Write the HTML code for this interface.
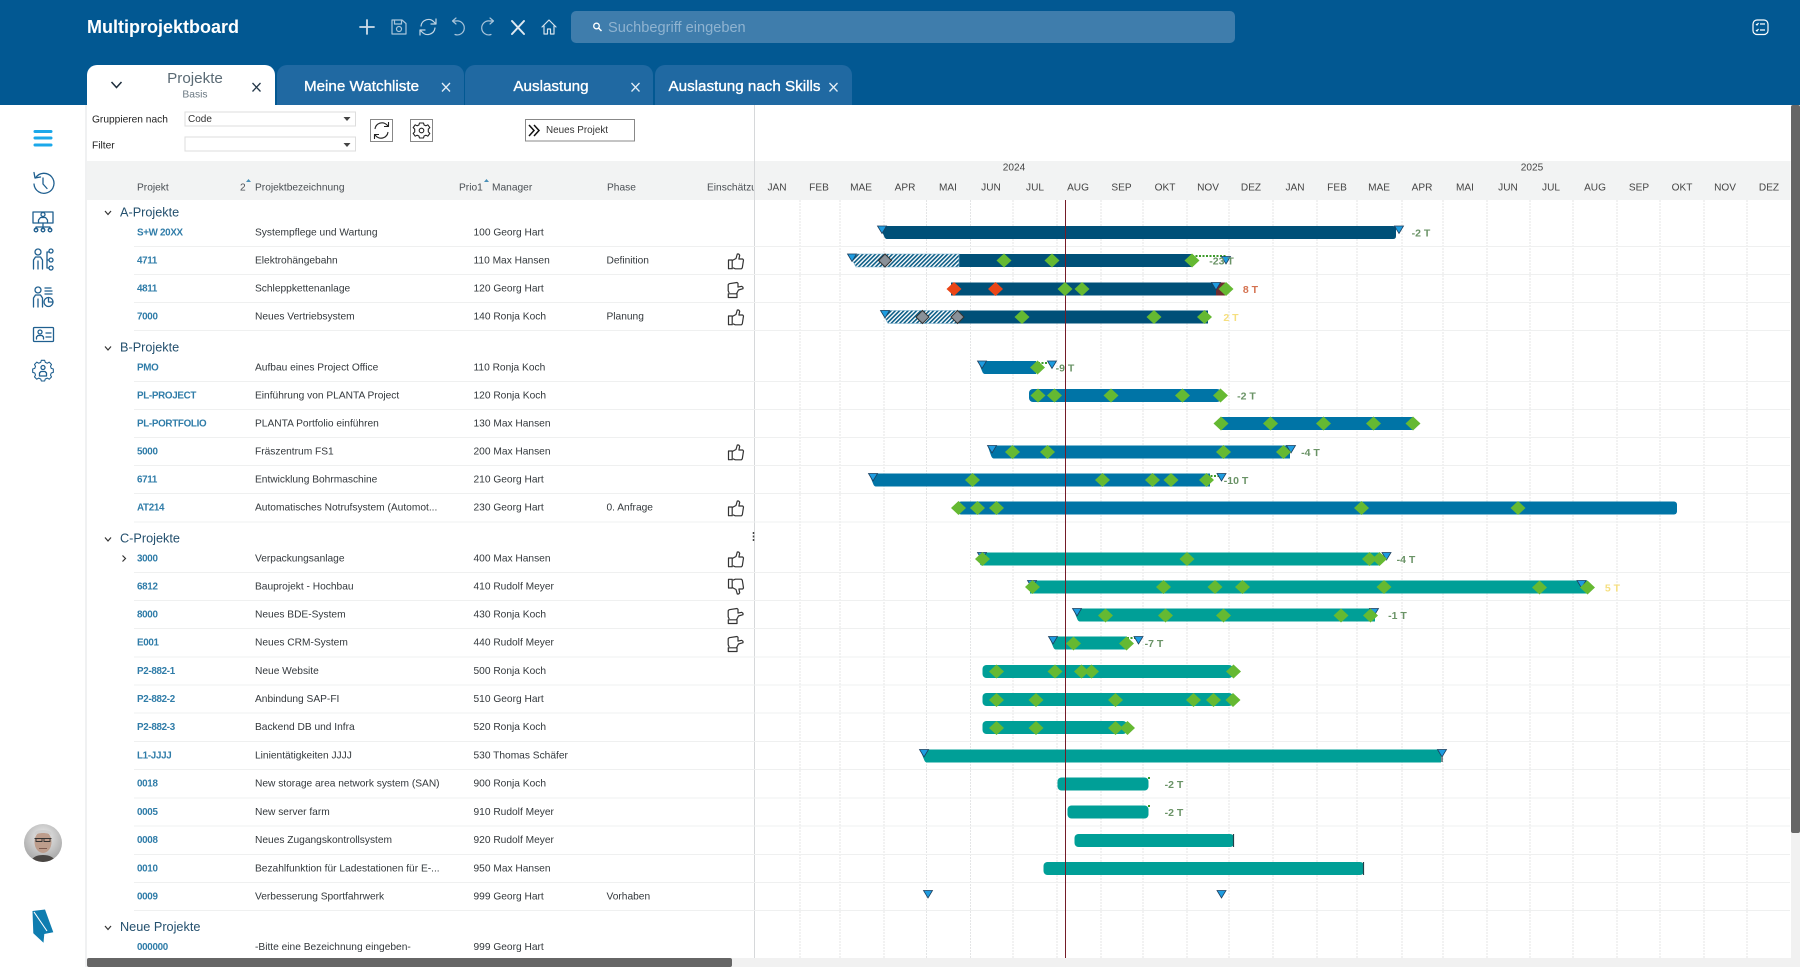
<!DOCTYPE html>
<html lang="de"><head><meta charset="utf-8"><title>Multiprojektboard</title>
<style>
html,body{margin:0;padding:0;background:#fff;width:1800px;height:967px;overflow:hidden}
svg{display:block;font-family:"Liberation Sans",sans-serif}
body>svg{filter:blur(.3px)}
.t text{font-size:10.2px;fill:#33383c}
.c text{font-size:9.8px;fill:#2f7ca8;font-weight:bold;letter-spacing:-.3px}
.h text{font-size:10.2px;fill:#4a4f54}
.m text{font-size:10.1px;fill:#444;text-anchor:middle}
.g text{font-size:12.7px;fill:#24506e}
.l text{font-size:10.5px;font-weight:bold;fill:#6a9366;text-anchor:middle}
.tab{font-size:15.2px;fill:#fff;text-anchor:middle;stroke:#fff;stroke-width:.35}
</style></head><body>
<svg width="1800" height="967" viewBox="0 0 1800 967" xmlns="http://www.w3.org/2000/svg">
<defs>
<path id="d" d="M-7.5 0 0-7 7.5 0 0 7z" fill="#65b932"/>
<path id="e" d="M-7.5 0 0-7 7.5 0 0 7z" fill="#ea4517"/>
<path id="x" d="M-6.5 0 0-6.5 6.5 0 0 6.5z" fill="#8a9199" stroke="#333" stroke-width="1"/>
<path id="v" d="M-4.5-6.5H4.500L0 1z" fill="#1e9ce0" stroke="#1d3f5e" stroke-width=".8"/>
<pattern id="h" width="3" height="3" patternUnits="userSpaceOnUse" patternTransform="rotate(45)"><rect width="3" height="3" fill="#fff"/><rect width="1.600" height="3" fill="#0b5d86"/></pattern>
<g id="tu" fill="none" stroke="#333" stroke-width="1.200" stroke-linejoin="round"><path d="M-7.500-2h3.700v8.700h-3.700z"/><path d="M-3.800-1.500 0-3.500 1.300-8h1.400l1 1.300-.8 3.700h3.800l.8 1-1.200 7.800-1 1h-6l-2.300-1"/></g>
<g id="ts"><use href="#tu" transform="matrix(0 -1 -1 0 0 0)"/></g>
<g id="td"><use href="#tu" transform="scale(1 -1)"/></g>
<clipPath id="av"><circle cx="43" cy="843" r="19"/></clipPath>
<radialGradient id="ag" cx=".5" cy=".35" r=".75"><stop offset="0" stop-color="#f0f0f0"/><stop offset="1" stop-color="#9a9a9a"/></radialGradient>
</defs>

<!-- Top -->
<rect width="1800" height="105" fill="#025892"/>
<text x="87" y="33" font-size="18" font-weight="bold" fill="#fff">Multiprojektboard</text>
<g fill="none" stroke="#a9c4da" stroke-width="1.200" stroke-linecap="round" stroke-linejoin="round">
<path d="M367 20v14M360 27h14" stroke="#cfdde9" stroke-width="1.800"/>
<path d="M392 20h10l4 3.500V34h-14zM394.500 20v4h7v-4"/><circle cx="399" cy="29" r="2.500"/>
<path d="M421 26a7.500 7.500 0 0 1 13-4l2 2M436 19v5h-5M435 28a7.500 7.500 0 0 1-13 4l-2-2M420 35v-5h5" stroke="#c2d5e4"/>
<path d="M453 21h3a7 7 0 1 1-1 13.500M456 18l-3.500 3 3.500 3"/>
<path d="M493 21h-3a7 7 0 1 0 1 13.500M490 18l3.500 3-3.500 3"/>
<path d="M512 21l12 13M524 21l-12 13" stroke="#dfe9f1" stroke-width="2"/>
<path d="M542 27l7-7 7 7M544 26v8h3.500v-5h3v5h3.500v-8" stroke="#d5e2ec"/>
</g>
<rect x="571" y="11" width="664" height="32" rx="5" fill="#3f7dac"/>
<circle cx="596.500" cy="26" r="2.800" fill="none" stroke="#fff" stroke-width="1.300"/><path d="M598.500 28l3 3" stroke="#fff" stroke-width="1.500"/>
<text x="608" y="32" font-size="14.600" fill="#8fb3d0">Suchbegriff eingeben</text>
<g fill="none" stroke="#fff" stroke-width="1.200"><rect x="1753" y="20" width="15" height="14.500" rx="4"/><path d="M1760 24h5M1760 30h5M1756 24l1 1 1.500-2M1756 30l1 1 1.500-2"/></g>

<!-- Tabs -->
<path d="M87 105V75a10 10 0 0 1 10-10h168a10 10 0 0 1 10 10v30z" fill="#fff"/>
<path d="M277 105V75a10 10 0 0 1 10-10h167a10 10 0 0 1 10 10v30zM465 105V75a10 10 0 0 1 10-10h168a10 10 0 0 1 10 10v30zM655 105V75a10 10 0 0 1 10-10h177a10 10 0 0 1 10 10v30z" fill="#2069a2"/>
<path d="M111.500 82l5 5.500 5-5.500" fill="none" stroke="#1d2d3c" stroke-width="1.500"/>
<text x="195" y="83" font-size="15.200" fill="#5b6b75" text-anchor="middle">Projekte</text>
<text x="195" y="97.500" font-size="10.300" fill="#6a7882" text-anchor="middle">Basis</text>
<path d="M252.500 83l8 8.500M260.500 83l-8 8.500" stroke="#24384a" stroke-width="1.300"/>
<text class="tab" x="361.500" y="91">Meine Watchliste</text>
<text class="tab" x="551" y="91">Auslastung</text>
<text class="tab" x="744.500" y="91">Auslastung nach Skills</text>
<path d="M442 83l8 8.500M450 83l-8 8.500M631.500 83l8 8.500M639.500 83l-8 8.500M829.500 83l8 8.500M837.500 83l-8 8.500" stroke="#e4eef6" stroke-width="1.300"/>

<!-- Sidebar -->
<rect x="85" y="105" width="2" height="862" fill="#f0f1f2"/>
<g stroke="#1ba8ea" stroke-width="3" stroke-linecap="round"><path d="M35 131.500h16M35 138h16M35 145h16"/></g>
<g fill="none" stroke="#1f5f8f" stroke-width="1.300" stroke-linecap="round" stroke-linejoin="round">
<path d="M35.500 178a10 10 0 1 1-1.500 6M34 172.500l1 5.500 5.500-1M43 178v6l4 4.500"/>
<rect x="33" y="212" width="20" height="11"/><circle cx="43" cy="214.500" r="2"/><path d="M38.500 223v-3l2-2.500h5l2 2.500v3M43 223v4M36 229v-2h14v2M43 227v2"/><circle cx="36" cy="230" r="1.800"/><circle cx="43" cy="230" r="1.800"/><circle cx="50" cy="230" r="1.800"/>
<circle cx="38" cy="252" r="3"/><path d="M33.500 269v-9l2-3h5l2 3v9M38 269v-8M47 252v16M47 252h2M47 260h2M47 268h2"/><circle cx="51" cy="251" r="2"/><circle cx="51" cy="260" r="2"/><circle cx="51" cy="268" r="2"/>
<circle cx="38" cy="290" r="3"/><path d="M33.500 307v-9l2-3h5l2 3v9M38 307v-8M45 288h6M45 291h7M45 294h7"/><circle cx="48.500" cy="302" r="4.500"/><path d="M48.500 302v-4.500M48.500 302h4.500"/>
<rect x="33.500" y="327.500" width="20" height="14" rx="1"/><circle cx="40" cy="332" r="2"/><path d="M36.500 339v-2l1.500-1.500h4l1.500 1.500v2M46 333h5M46 337h5"/>
<path transform="translate(43 371) scale(.82) translate(-43 -373)" d="M41 360h4l.8 2.500 2.500 1 2.300-1.300 2.800 2.800-1.300 2.300 1 2.500 2.500.8v4l-2.500.8-1 2.500 1.300 2.300-2.800 2.800-2.300-1.300-2.500 1-.8 2.500h-4l-.8-2.500-2.500-1-2.300 1.300-2.800-2.800 1.300-2.300-1-2.500-2.500-.8v-4l2.500-.8 1-2.500-1.300-2.300 2.800-2.800 2.300 1.300 2.500-1z"/><circle cx="43" cy="367.500" r="2"/><path d="M39.500 376v-3l1.500-1.500h4l1.500 1.500v3z"/>
</g>
<g clip-path="url(#av)"><rect x="24" y="824" width="38" height="38" fill="url(#ag)"/><path d="M31 862c1-5 6-7 12-7s11 2 13 7z" fill="#4a4643"/><ellipse cx="43" cy="842" rx="8.500" ry="11" fill="#bd9d8c"/><path d="M35 836c1-4 15-4 16 0l.5-3c-2-4-15-4-17 0z" fill="#cfcfcf"/><path d="M34.500 838.500h17M36 838.500h6v3h-6zM44 838.500h6v3h-6z" fill="none" stroke="#333" stroke-width=".9"/><path d="M39 848.500h8" stroke="#7d5b50"/></g>
<path d="M32.500 911 45 909.500 53.300 932.300 44.300 934 43.500 942.700 33.300 933.300z" fill="#0f7db0"/>
<path d="M34 912 47 931" stroke="#fff" stroke-width="1.100"/>

<!-- Toolbar -->
<text x="92" y="122.500" font-size="10.200" fill="#222">Gruppieren nach</text>
<text x="92" y="148.500" font-size="10.200" fill="#222">Filter</text>
<rect x="185" y="112" width="170.500" height="14" fill="#fff" stroke="#ddd"/>
<rect x="185" y="137" width="170.500" height="14" fill="#fff" stroke="#ddd"/>
<text x="188" y="122" font-size="10" fill="#333">Code</text>
<path d="M343.500 117h7l-3.500 4zM343.500 143h7l-3.500 4z" fill="#444"/>
<g fill="#fff" stroke="#888"><rect x="370.500" y="119.500" width="22" height="22"/><rect x="410.500" y="119.500" width="22" height="22"/><rect x="525.500" y="119.500" width="109" height="21.500"/></g>
<g fill="none" stroke="#222" stroke-width="1.100" stroke-linejoin="round"><path d="M375 129a7 7 0 0 1 12-4l1.500 1.500M388.500 122v4.500h-4.500M388 132a7 7 0 0 1-12 4l-1.500-1.500M374.500 139v-4.500h4.500"/><circle cx="421.500" cy="130.500" r="2.300"/><path d="M419.500 123h4l.6 2 1.800.8 1.900-1 2 2.800-1.500 1.500v2.800l1.500 1.500-2 2.800-1.900-1-1.800.8-.6 2h-4l-.6-2-1.800-.8-1.900 1-2-2.800 1.500-1.500v-2.800l-1.500-1.500 2-2.800 1.900 1 1.800-.8z"/></g>
<path d="M529 125l5 5.500-5 5.500M534 125l5 5.500-5 5.500" fill="none" stroke="#111" stroke-width="1.500"/>
<text x="546" y="133" font-size="9.900" fill="#333">Neues Projekt</text>

<!-- Header band -->
<rect x="87" y="161" width="1703.500" height="39" fill="#f2f3f3"/>
<g class="h"><text x="137" y="190.500">Projekt</text><text x="240" y="190.500">2</text><text x="255" y="190.500">Projektbezeichnung</text><text x="459" y="190.500">Prio1</text><text x="492" y="190.500">Manager</text><text x="607" y="190.500">Phase</text>
<svg x="700" y="180" width="54" height="16"><text x="7" y="10.500">Einschätzung</text></svg></g>
<path d="M246 182l2.500-3 2.500 3zM484 182l2.500-3 2.500 3z" fill="#4a90b8"/>
<g class="m"><text x="1014" y="170.500">2024</text><text x="1532" y="170.500">2025</text>
<text x="777" y="190.500">JAN</text><text x="819" y="190.500">FEB</text><text x="861" y="190.500">MAE</text><text x="905" y="190.500">APR</text><text x="948" y="190.500">MAI</text><text x="991" y="190.500">JUN</text><text x="1035" y="190.500">JUL</text><text x="1078" y="190.500">AUG</text><text x="1121.500" y="190.500">SEP</text><text x="1165" y="190.500">OKT</text><text x="1208" y="190.500">NOV</text><text x="1251" y="190.500">DEZ</text><text x="1295" y="190.500">JAN</text><text x="1337" y="190.500">FEB</text><text x="1379" y="190.500">MAE</text><text x="1422" y="190.500">APR</text><text x="1465" y="190.500">MAI</text><text x="1508" y="190.500">JUN</text><text x="1551" y="190.500">JUL</text><text x="1595" y="190.500">AUG</text><text x="1639" y="190.500">SEP</text><text x="1682" y="190.500">OKT</text><text x="1725" y="190.500">NOV</text><text x="1769" y="190.500">DEZ</text></g>

<!-- Grid -->
<path d="M800 200V958M840 200V958M884 200V958M926.500 200V958M970.500 200V958M1013 200V958M1057 200V958M1101 200V958M1143 200V958M1187 200V958M1229 200V958M1273 200V958M1317 200V958M1357 200V958M1402 200V958M1443 200V958M1487 200V958M1530 200V958M1573 200V958M1617 200V958M1660 200V958M1704 200V958M1747 200V958" stroke="#e4e5e6" stroke-dasharray="2 1"/>
<path d="M754.500 105V958" stroke="#d6d8da"/>
<path d="M134 246.500H1790M134 274.500H1790M134 302.500H1790M134 330.500H1790M134 381.500H1790M134 409.500H1790M134 437.500H1790M134 465.500H1790M134 493.500H1790M134 522H1790M134 572.500H1790M134 600.500H1790M134 628.500H1790M134 657H1790M134 685H1790M134 713H1790M134 741.500H1790M134 769.500H1790M134 798H1790M134 826H1790M134 854.500H1790M134 882.500H1790M134 910.500H1790" stroke="#eff0f0"/>
<path d="M753.500 532v2M753.500 535.500v2M753.500 539v2" stroke="#444" stroke-width="1.500"/>

<!-- Group headers -->
<g class="g"><text x="120" y="216.500">A-Projekte</text><text x="120" y="351.500">B-Projekte</text><text x="120" y="542.500">C-Projekte</text><text x="120" y="931">Neue Projekte</text></g>
<path d="M105 211l3 3.500 3-3.500M105 346.500l3 3.500 3-3.500M105 537.500l3 3.500 3-3.500M105 926l3 3.500 3-3.500M122.500 555.500l3 3-3 3" fill="none" stroke="#333" stroke-width="1.200"/>

<!-- Table -->
<g class="c">
<text x="137" y="235.500">S+W 20XX</text><text x="137" y="263.500">4711</text><text x="137" y="291.500">4811</text><text x="137" y="319.500">7000</text><text x="137" y="370.500">PMO</text><text x="137" y="398.500">PL-PROJECT</text><text x="137" y="426.500">PL-PORTFOLIO</text><text x="137" y="454.500">5000</text><text x="137" y="482.500">6711</text><text x="137" y="510.500">AT214</text><text x="137" y="561.500">3000</text><text x="137" y="589.500">6812</text><text x="137" y="617.500">8000</text><text x="137" y="645.500">E001</text><text x="137" y="674">P2-882-1</text><text x="137" y="702">P2-882-2</text><text x="137" y="730">P2-882-3</text><text x="137" y="758.500">L1-JJJJ</text><text x="137" y="786.500">0018</text><text x="137" y="815">0005</text><text x="137" y="843">0008</text><text x="137" y="871.500">0010</text><text x="137" y="899.500">0009</text><text x="137" y="950">000000</text></g>
<g class="t">
<text x="255" y="235.500">Systempflege und Wartung</text><text x="473.500" y="235.500">100 Georg Hart</text>
<text x="255" y="263.500">Elektrohängebahn</text><text x="473.500" y="263.500">110 Max Hansen</text><text x="606.500" y="263.500">Definition</text>
<text x="255" y="291.500">Schleppkettenanlage</text><text x="473.500" y="291.500">120 Georg Hart</text>
<text x="255" y="319.500">Neues Vertriebsystem</text><text x="473.500" y="319.500">140 Ronja Koch</text><text x="606.500" y="319.500">Planung</text>
<text x="255" y="370.500">Aufbau eines Project Office</text><text x="473.500" y="370.500">110 Ronja Koch</text>
<text x="255" y="398.500">Einführung von PLANTA Project</text><text x="473.500" y="398.500">120 Ronja Koch</text>
<text x="255" y="426.500">PLANTA Portfolio einführen</text><text x="473.500" y="426.500">130 Max Hansen</text>
<text x="255" y="454.500">Fräszentrum FS1</text><text x="473.500" y="454.500">200 Max Hansen</text>
<text x="255" y="482.500">Entwicklung Bohrmaschine</text><text x="473.500" y="482.500">210 Georg Hart</text>
<text x="255" y="510.500">Automatisches Notrufsystem (Automot...</text><text x="473.500" y="510.500">230 Georg Hart</text><text x="606.500" y="510.500">0. Anfrage</text>
<text x="255" y="561.500">Verpackungsanlage</text><text x="473.500" y="561.500">400 Max Hansen</text>
<text x="255" y="589.500">Bauprojekt - Hochbau</text><text x="473.500" y="589.500">410 Rudolf Meyer</text>
<text x="255" y="617.500">Neues BDE-System</text><text x="473.500" y="617.500">430 Ronja Koch</text>
<text x="255" y="645.500">Neues CRM-System</text><text x="473.500" y="645.500">440 Rudolf Meyer</text>
<text x="255" y="674">Neue Website</text><text x="473.500" y="674">500 Ronja Koch</text>
<text x="255" y="702">Anbindung SAP-FI</text><text x="473.500" y="702">510 Georg Hart</text>
<text x="255" y="730">Backend DB und Infra</text><text x="473.500" y="730">520 Ronja Koch</text>
<text x="255" y="758.500">Linientätigkeiten JJJJ</text><text x="473.500" y="758.500">530 Thomas Schäfer</text>
<text x="255" y="786.500">New storage area network system (SAN)</text><text x="473.500" y="786.500">900 Ronja Koch</text>
<text x="255" y="815">New server farm</text><text x="473.500" y="815">910 Rudolf Meyer</text>
<text x="255" y="843">Neues Zugangskontrollsystem</text><text x="473.500" y="843">920 Rudolf Meyer</text>
<text x="255" y="871.500">Bezahlfunktion für Ladestationen für E-...</text><text x="473.500" y="871.500">950 Max Hansen</text>
<text x="255" y="899.500">Verbesserung Sportfahrwerk</text><text x="473.500" y="899.500">999 Georg Hart</text><text x="606.500" y="899.500">Vorhaben</text>
<text x="255" y="950">-Bitte eine Bezeichnung eingeben-</text><text x="473.500" y="950">999 Georg Hart</text>
</g>
<use href="#tu" x="736" y="262"/><use href="#ts" transform="translate(735 290)"/><use href="#tu" x="736" y="318"/><use href="#tu" x="736" y="453"/><use href="#tu" x="736" y="509"/><use href="#tu" x="736" y="560"/><use href="#td" transform="translate(736 586)"/><use href="#ts" transform="translate(735 616)"/><use href="#ts" transform="translate(735 644)"/>

<!-- Gantt bars -->
<g fill="#005078">
<path d="M879.500 226H1393q3 0 3 3v7q0 3-3 3H887q-2 0-3-3z"/>
<rect x="959" y="254" width="233" height="13"/>
<rect x="951" y="282.500" width="274" height="13"/>
<rect x="957" y="310.500" width="251" height="13"/>
</g>
<path d="M849 254H959V267H856zM881 310.500H957V323.500H888z" fill="url(#h)" stroke="#7fb3d0" stroke-width=".6"/>
<rect x="1216" y="282.500" width="9" height="13" fill="#6e2c2f"/>
<g fill="#0074a6">
<path d="M978 361H1036V374H985q-2 0-3-3z"/>
<rect x="1029" y="389" width="192" height="13" rx="4"/>
<rect x="1221" y="417" width="192" height="13"/>
<path d="M987.500 445.500H1290V458.500H994q-2 0-3-3z"/>
<path d="M869 473.500H1210V486.500H876q-2 0-3-3z"/>
<rect x="958" y="501.500" width="719" height="13" rx="3"/>
</g>
<g fill="#009f97">
<rect x="980" y="552.500" width="400" height="13" rx="2"/>
<rect x="1030" y="580.500" width="557" height="13"/>
<path d="M1073 608.500H1375V621.500H1080q-2 0-3-3z"/>
<path d="M1049 636.500H1127V649.500H1056q-2 0-3-3z"/>
<rect x="982.500" y="665" width="250.500" height="13" rx="4"/>
<rect x="982.500" y="693" width="250.500" height="13" rx="4"/>
<rect x="982.500" y="721" width="144.500" height="13" rx="4"/>
<path d="M920 749.500H1441V762.500H927q-2 0-3-3z"/>
<rect x="1057.500" y="777.500" width="91" height="13" rx="4"/>
<rect x="1067.500" y="805.500" width="81" height="13" rx="4"/>
<rect x="1074.500" y="834" width="159.500" height="13" rx="4"/>
<rect x="1043.500" y="862" width="320.500" height="13" rx="4"/>
</g>
<path d="M1233.500 834v13M1363.500 862v13M1442 750v12" stroke="#23404a" stroke-width="1.200"/>
<path d="M1065.500 200V958" stroke="#741c28" stroke-width="1"/>
<path d="M1192 256h34M1038 363h14M1207 476h14M1127 638h11M1148 778h3M1148 806h3" stroke="#3c9a2a" stroke-width="2" stroke-dasharray="2 1.500"/>

<!-- Triangles -->
<use href="#v" x="882" y="232.500"/><use href="#v" x="1399" y="232.500"/>
<use href="#v" x="852" y="260.500"/><use href="#v" x="1226" y="263"/>
<use href="#v" x="1216" y="289"/><use href="#v" x="885" y="317"/>
<use href="#v" x="982" y="367.500"/><use href="#v" x="1052" y="367.500"/>
<use href="#v" x="992" y="452"/><use href="#v" x="1291" y="452"/>
<use href="#v" x="873" y="480"/><use href="#v" x="1221.500" y="480"/>
<use href="#v" x="982" y="559"/><use href="#v" x="1386.500" y="559"/>
<use href="#v" x="1032" y="587"/><use href="#v" x="1581.500" y="587"/>
<use href="#v" x="1077" y="615"/><use href="#v" x="1374" y="615"/>
<use href="#v" x="1053" y="643"/><use href="#v" x="1138.500" y="643"/>
<use href="#v" x="924" y="756"/><use href="#v" x="1442" y="756"/>
<use href="#v" x="928" y="897"/><use href="#v" x="1221.500" y="897"/>

<!-- Diamonds -->
<use href="#x" x="885" y="260.500"/><use href="#x" x="922.500" y="317"/><use href="#x" x="957.500" y="317"/>
<use href="#e" x="954" y="289"/><use href="#e" x="995.500" y="289"/>
<use href="#d" x="1004" y="260.500"/><use href="#d" x="1052" y="260.500"/><use href="#d" x="1192" y="260.500"/>
<use href="#d" x="1065" y="289"/><use href="#d" x="1082" y="289"/><use href="#d" x="1226" y="289"/>
<use href="#d" x="1022" y="317"/><use href="#d" x="1154" y="317"/><use href="#d" x="1204.500" y="317"/>
<use href="#d" x="1037.500" y="367.500"/>
<use href="#d" x="1038" y="395.500"/><use href="#d" x="1054.500" y="395.500"/><use href="#d" x="1111" y="395.500"/><use href="#d" x="1182.500" y="395.500"/><use href="#d" x="1220.500" y="395.500"/>
<use href="#d" x="1221" y="423.500"/><use href="#d" x="1270.500" y="423.500"/><use href="#d" x="1323.500" y="423.500"/><use href="#d" x="1373.500" y="423.500"/><use href="#d" x="1413" y="423.500"/>
<use href="#d" x="1012.500" y="452"/><use href="#d" x="1047.500" y="452"/><use href="#d" x="1223.500" y="452"/><use href="#d" x="1283.500" y="452"/>
<use href="#d" x="972.500" y="480"/><use href="#d" x="1102.500" y="480"/><use href="#d" x="1152.500" y="480"/><use href="#d" x="1171" y="480"/><use href="#d" x="1206.500" y="480"/>
<use href="#d" x="958.500" y="508"/><use href="#d" x="977.500" y="508"/><use href="#d" x="996.500" y="508"/><use href="#d" x="1361.500" y="508"/><use href="#d" x="1518" y="508"/>
<use href="#d" x="982.500" y="559"/><use href="#d" x="1187" y="559"/><use href="#d" x="1369.500" y="559"/><use href="#d" x="1379.500" y="559"/>
<use href="#d" x="1032.500" y="587"/><use href="#d" x="1163.500" y="587"/><use href="#d" x="1215" y="587"/><use href="#d" x="1242.500" y="587"/><use href="#d" x="1384" y="587"/><use href="#d" x="1539.500" y="587.500"/><use href="#d" x="1587.500" y="587.500"/>
<use href="#d" x="1105.500" y="615.500"/><use href="#d" x="1165.500" y="615.500"/><use href="#d" x="1223.500" y="615.500"/><use href="#d" x="1341" y="615.500"/><use href="#d" x="1370.500" y="615.500"/>
<use href="#d" x="1073.500" y="643.500"/><use href="#d" x="1126.500" y="643.500"/>
<use href="#d" x="996.500" y="671.500"/><use href="#d" x="1055" y="671.500"/><use href="#d" x="1081.500" y="671.500"/><use href="#d" x="1091.500" y="671.500"/><use href="#d" x="1233.500" y="671.500"/>
<use href="#d" x="996.500" y="700"/><use href="#d" x="1036" y="700"/><use href="#d" x="1115.500" y="700"/><use href="#d" x="1193.500" y="700"/><use href="#d" x="1213.500" y="700"/><use href="#d" x="1233" y="700"/>
<use href="#d" x="996.500" y="728"/><use href="#d" x="1036" y="728"/><use href="#d" x="1115.500" y="728"/><use href="#d" x="1127.500" y="728"/>

<!-- Labels -->
<g class="l">
<text x="1421" y="236.500">-2 T</text><text x="1221.500" y="264.500">-23 T</text>
<text x="1250.500" y="293" style="fill:#d4714f">8 T</text><text x="1231" y="321" style="fill:#f6df7f">2 T</text>
<text x="1065" y="371.500">-9 T</text><text x="1246.500" y="399.500">-2 T</text><text x="1310.500" y="456">-4 T</text><text x="1236" y="484">-10 T</text>
<text x="1406" y="563">-4 T</text><text x="1612.500" y="591.500" style="fill:#f6df7f">5 T</text><text x="1397.500" y="619">-1 T</text><text x="1154" y="647">-7 T</text><text x="1174" y="788">-2 T</text><text x="1174" y="816">-2 T</text>
</g>

<!-- Scrollbars -->
<rect x="87" y="958" width="1713" height="9" fill="#f1f1f1"/>
<rect x="1791" y="105" width="9" height="862" fill="#f1f1f1"/>
<rect x="1791" y="105" width="9" height="728" rx="2" fill="#666"/>
<rect x="87" y="958" width="645" height="9" rx="2" fill="#666"/>
</svg>
</body></html>
